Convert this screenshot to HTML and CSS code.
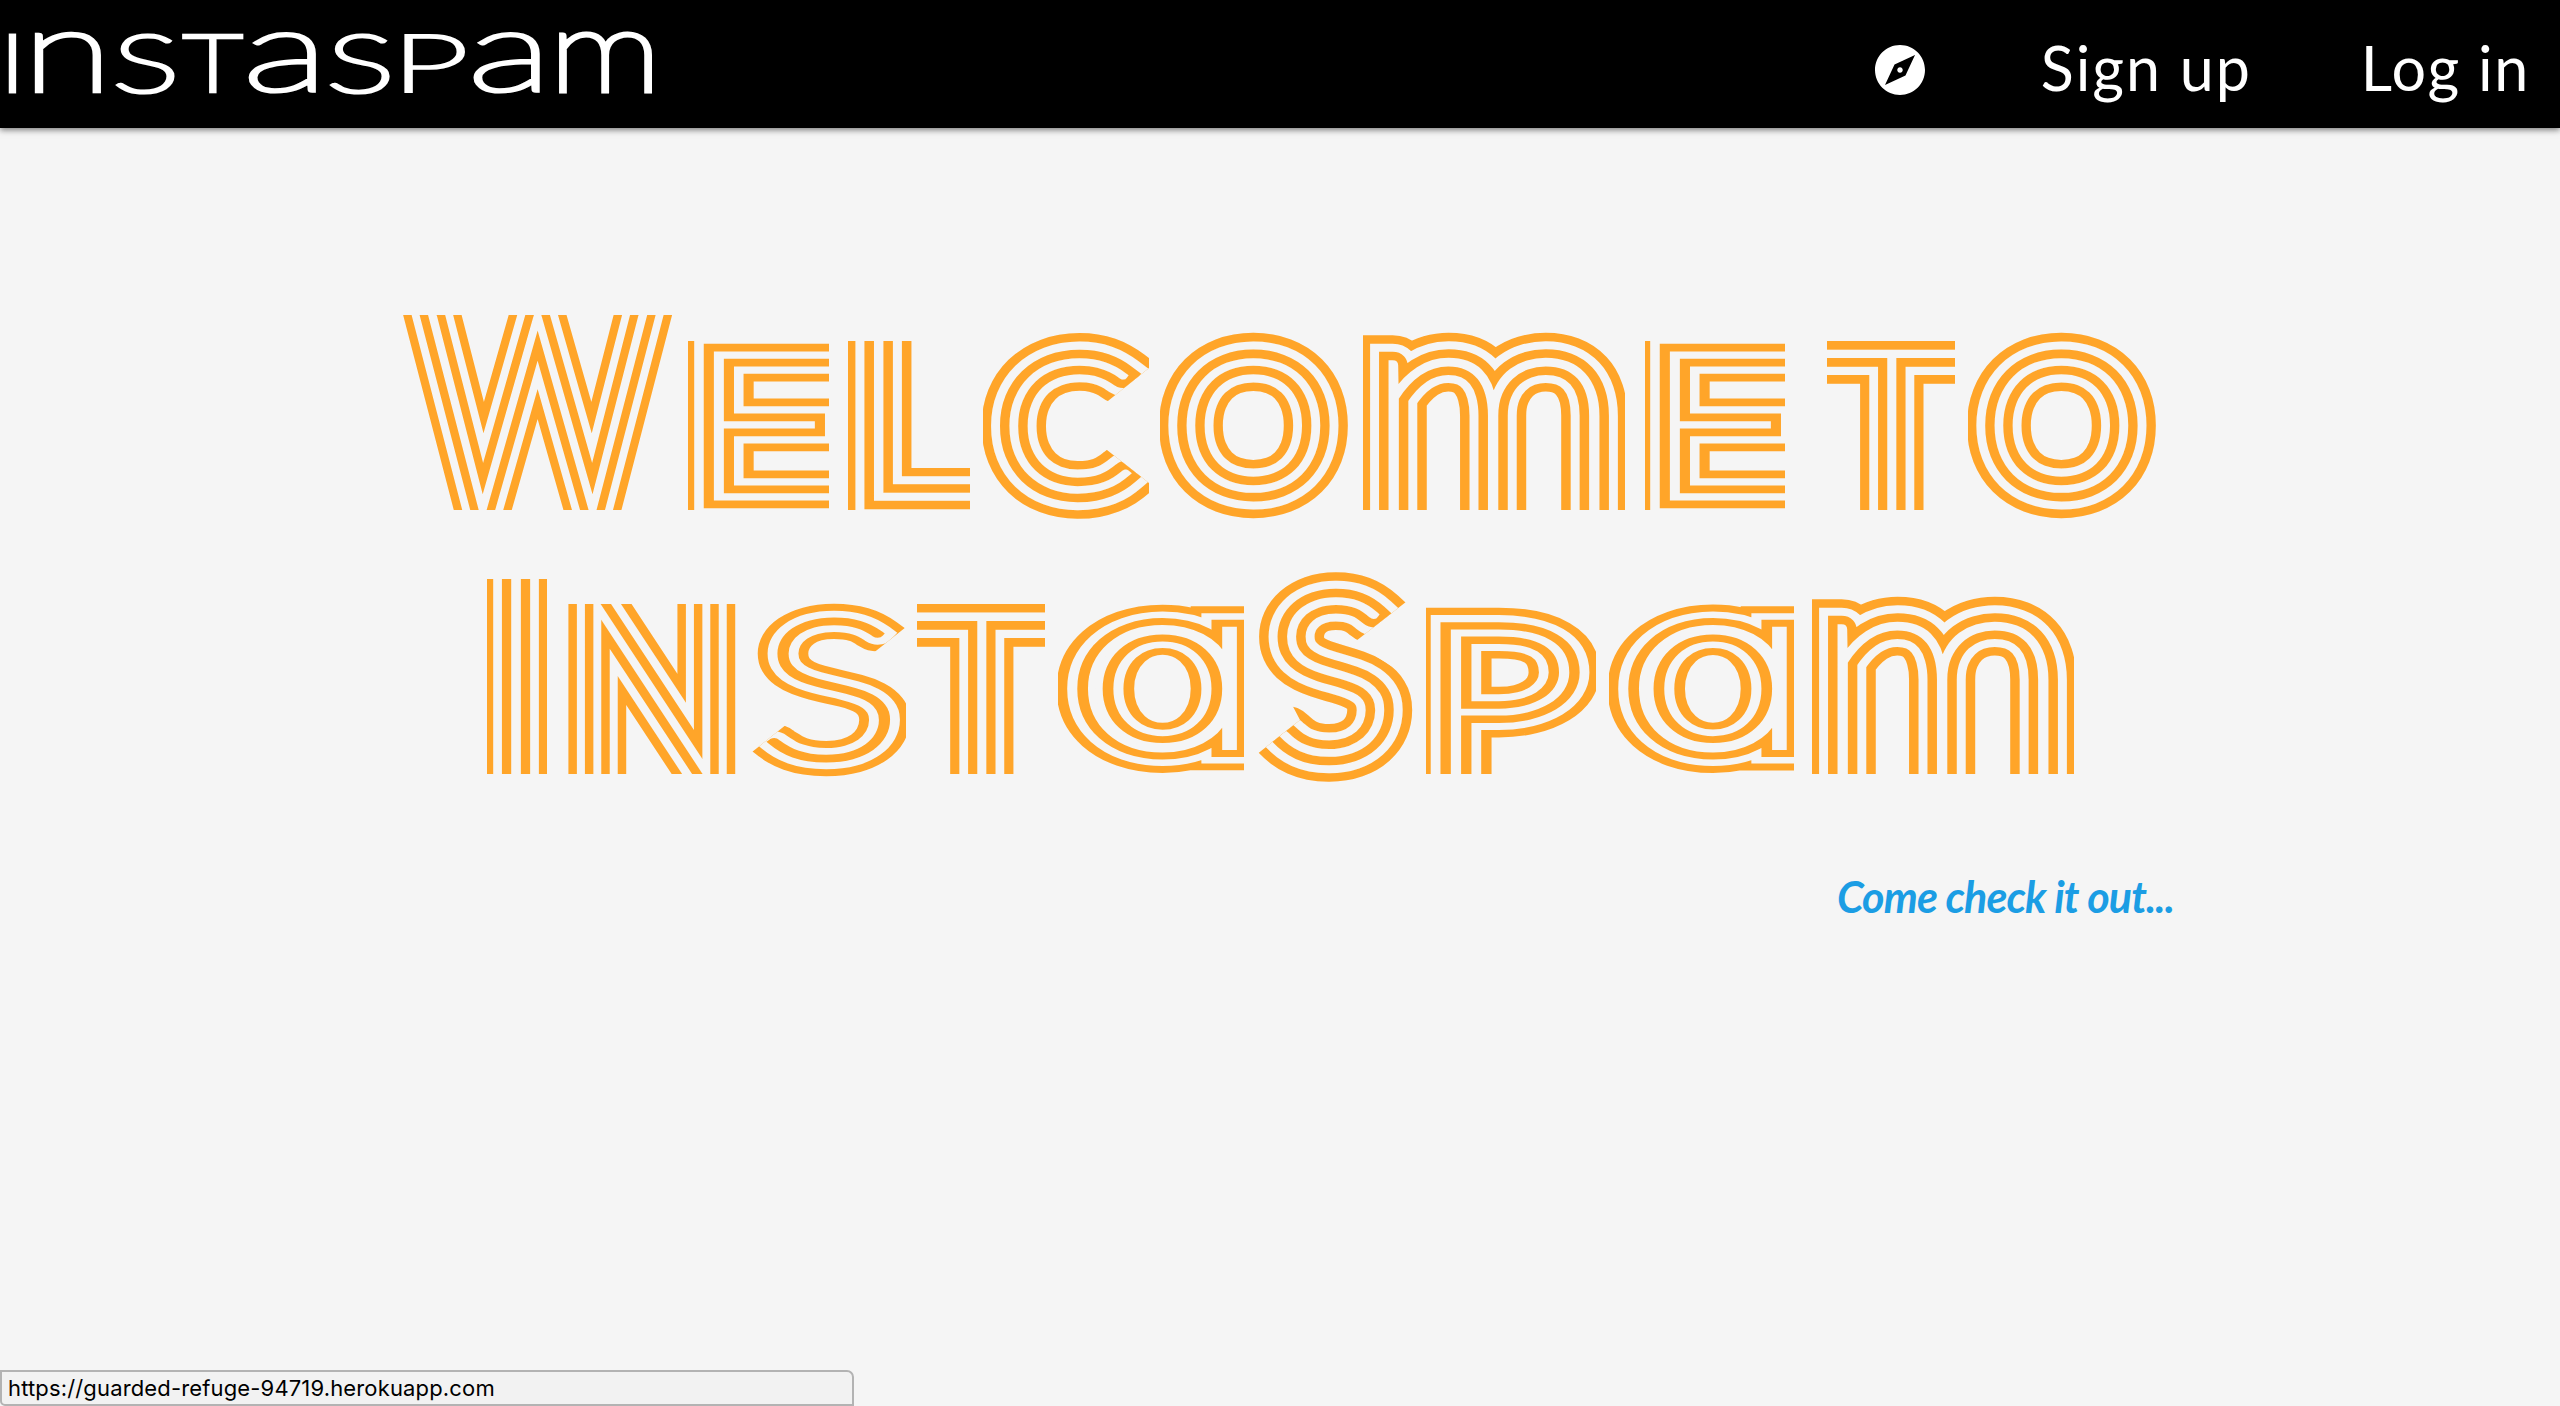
FILE: index.html
```html
<!DOCTYPE html>
<html lang="en">
<head>
<meta charset="utf-8">
<title>InstaSpam</title>
<link rel="stylesheet" href="styles.css">
</head>
<body>
<header class="bar">
  <a class="logo" aria-label="InstaSpam"><svg width="670" height="128" viewBox="0 0 670 128"><text class="cap" data-fit="9 33 16 94">I</text><text data-fit="35 31 101 94">n</text><text class="cap" data-fit="117 32 174 95">s</text><text class="cap" data-fit="182 33 243 94">t</text><text data-fit="249 31 316 95">a</text><text class="cap" data-fit="331 32 389 95">S</text><text class="cap" data-fit="405 33 465 94">p</text><text data-fit="474 31 540 95">a</text><text data-fit="559 31 652 94">m</text></svg></a>
  <nav class="links">
    <a class="explore" aria-label="Explore"><svg width="60" height="60" viewBox="0 0 24 24"><path d="M12 10.9c-.61 0-1.1.49-1.1 1.1s.49 1.1 1.1 1.1c.61 0 1.1-.49 1.1-1.1s-.49-1.1-1.1-1.1zM12 2C6.48 2 2 6.48 2 12s4.48 10 10 10 10-4.48 10-10S17.52 2 12 2zm2.19 12.19L6 18l3.81-8.19L18 6l-3.81 8.19z"/></svg></a>
    <a class="signup">Sign up</a>
    <a class="login">Log in</a>
  </nav>
</header>
<main>
  <h1 class="hero" aria-label="Welcome to InstaSpam">
    <svg width="1760" height="480" viewBox="400 310 1760 480">
      <defs>
        <clipPath id="cut-c"><path d="M0 0H180L166 36L110 81V107L166 151L180 190H0z"/></clipPath>
        <clipPath id="cut-s"><path d="M-5 -5H154V27L110 62L116 72L154 88V190H0V152L40 120L30 112L-5 96z"/></clipPath>
        <clipPath id="cut-big-s"><path d="M-5 -5H155V27L100 70L112 80L158 110V220H0V184L44 149L32 126L-5 100z"/></clipPath>
      </defs>
      <g class="ring-1"><g id="letters"><svg x="402.5" y="315" width="270" height="195"><text class="cap" data-fit="431 315 644 510">W</text></svg><svg x="688" y="341" width="141" height="169"><text class="cap" data-fit="717 353 829 498">e</text></svg><svg x="848" y="341" width="122" height="169"><text class="cap" data-fit="877 341 970 498">l</text></svg><svg x="983" y="332" width="166" height="187"><g clip-path="url(#cut-c)"><text class="cap" data-fit="1012 360 1128 490">c</text></g></svg><svg x="1160" y="331" width="188" height="189"><text class="cap" data-fit="1189 360 1318 490">o</text></svg><svg x="1363" y="332" width="262" height="178"><text data-fit="1391 360 1597 510">m</text></svg><svg x="1645" y="341" width="140" height="169"><text class="cap" data-fit="1673 353 1785 498">e</text></svg><svg x="1827" y="341" width="128" height="169"><text class="cap" data-fit="1827 352 1955 510">t</text></svg><svg x="1968" y="331" width="188" height="189"><text class="cap" data-fit="1997 360 2126 490">o</text></svg> <svg x="487" y="579" width="60" height="195"><text class="cap" data-fit="514 579 518.4 774">I</text></svg><svg x="568" y="604" width="168" height="170"><text class="cap" data-fit="596 604 708 774">n</text></svg><svg x="752" y="600" width="154" height="178"><g clip-path="url(#cut-s)"><text class="cap three" data-fit="772 619 886 759">s</text></g></svg><svg x="917" y="604" width="128" height="170"><text class="cap" data-fit="917 615 1045 774">t</text></svg><svg x="1058" y="599" width="186" height="180"><text class="round" data-fit="1087 627 1215 751">a</text></svg><svg x="1256" y="571" width="158" height="212"><g clip-path="url(#cut-big-s)"><text class="cap" data-fit="1282 599 1381 754">S</text></g></svg><svg x="1426" y="604" width="170" height="170"><text class="cap" data-fit="1454 631 1567 774">p</text></svg><svg x="1609" y="599" width="185" height="180"><text class="round" data-fit="1638 627 1765 751">a</text></svg><svg x="1812" y="596" width="262" height="178"><text data-fit="1840 624 2046 774">m</text></svg></g></g>
      <use class="ring-2" href="#letters"/>
      <use class="ring-3" href="#letters"/>
      <use class="ring-4" href="#letters"/>
    </svg>
  </h1>
  <p class="tagline">Come check it out...</p>
</main>
<footer class="status">https://guarded-refuge-94719.herokuapp.com</footer>
<script src="fit.js"></script>
</body>
</html>
```
FILE: styles.css
```css
* { box-sizing: border-box; }
body {
  margin: 0;
  height: 1406px;
  overflow: hidden;
  display: flex;
  flex-direction: column;
  background: #f5f5f5;
  font-family: Lato, sans-serif;
}
.bar {
  flex: none;
  height: 128px;
  display: flex;
  justify-content: space-between;
  background: #000;
  color: #fff;
  box-shadow: 0 2px 6px rgba(0, 0, 0, .5);
}
.bar svg { display: block; overflow: visible; }
.logo text {
  fill: #fff;
  stroke: #fff;
  stroke-width: 5.5px;
}
svg text {
  font: 100 200px Lato, sans-serif;
  vector-effect: non-scaling-stroke;
  stroke-linejoin: miter;
  stroke-miterlimit: 8;
}
svg .round { font-family: Inter, sans-serif; font-feature-settings: "cv11"; }
.cap { text-transform: uppercase; }
.links {
  display: flex;
  align-items: center;
  padding: 12px 30px 0 0;
  font-size: 61px;
}
.explore { fill: #fff; margin-right: 111px; }
.signup, .login { padding-bottom: 6px; letter-spacing: 1.6px; }
.signup { margin-right: 109px; letter-spacing: 2px; }
main { flex: 1; }
.hero { margin: 182px 0 0; text-align: center; font-size: 0; }
.ring-1 { --four: 59px; --three: 41px; color: #ffa529; }
.ring-2 { --four: 41px; --three: 24px; color: #f5f5f5; }
.ring-3 { --four: 24px; --three: 7px; color: #ffa529; }
.ring-4 { --four: 6px; --three: 0px; --thin: none; color: #f5f5f5; }
.hero text {
  fill: currentColor;
  stroke: currentColor;
  stroke-width: var(--four);
}
.hero .three {
  stroke-width: var(--three);
  fill: var(--thin, currentColor);
  stroke: var(--thin, currentColor);
}
.tagline {
  margin: 82px 386px 0 0;
  text-align: right;
  font: italic 700 43px/50px Lato, sans-serif;
  letter-spacing: -.9px;
  color: #1b9de4;
}
.status {
  flex: none;
  width: 854px;
  height: 36px;
  padding-left: 6px;
  border: 2px solid #b3b3b3;
  border-radius: 0 7px 0 5px;
  background: #f2f2f2;
  font: 22px/32px Inter, sans-serif;
  letter-spacing: .15px;
  color: #000;
}
```
FILE: fit.js
```js
// Scales each display letter so that its ink fills the box in data-fit (x0 y0 x1 y1).
const ctx = document.createElement('canvas').getContext('2d');
document.querySelectorAll('text[data-fit]').forEach((el) => {
  const [x0, y0, x1, y1] = el.dataset.fit.split(' ').map(Number);
  const cs = getComputedStyle(el);
  ctx.font = `${cs.fontWeight} 200px ${cs.fontFamily}`;
  const ch = cs.textTransform === 'uppercase' ? el.textContent.toUpperCase() : el.textContent;
  const m = ctx.measureText(ch);
  const inLogo = el.closest('.logo');
  const inset = inLogo ? 2.75 : 0;
  const frame = el.closest('svg');
  const dx = inLogo ? 0 : frame.x.baseVal.value;
  const dy = inLogo ? 0 : frame.y.baseVal.value;
  const sx = (x1 - x0 - 2 * inset) / (m.actualBoundingBoxRight + m.actualBoundingBoxLeft);
  const sy = (y1 - y0 - 2 * inset) / (m.actualBoundingBoxAscent + m.actualBoundingBoxDescent);
  const tx = x0 + inset - dx + m.actualBoundingBoxLeft * sx;
  const ty = y0 + inset - dy + m.actualBoundingBoxAscent * sy;
  el.setAttribute('transform', `matrix(${sx} 0 0 ${sy} ${tx} ${ty})`);
});
```
